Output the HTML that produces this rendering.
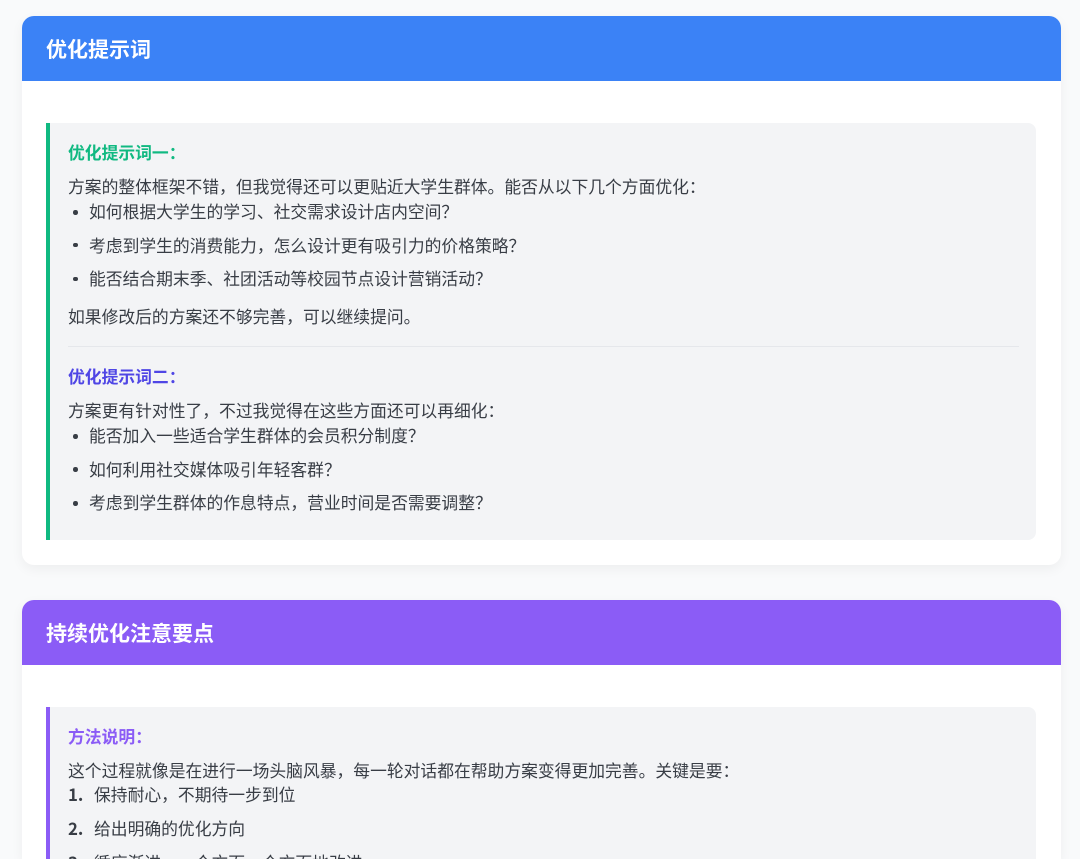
<!DOCTYPE html>
<html lang="zh"><head><meta charset="utf-8"><title>优化提示词</title>
<style>
html,body{margin:0;padding:0;width:1080px;height:859px;overflow:hidden;background:#f9fafb}
body{position:relative;font-family:"Noto Sans CJK SC","Liberation Sans",sans-serif;color:#383d45}
.clip{position:absolute;left:0;top:0;width:1080px;height:859px;overflow:hidden}
.card{position:absolute;left:22px;width:1039px;background:#fff;border-radius:12px;box-shadow:0 4px 12px rgba(0,0,0,.05)}
.hd{position:absolute;left:0;top:0;width:100%;height:65px;border-radius:12px 12px 0 0}
.hd div{position:absolute;left:24px;top:0;line-height:67px;font-size:21px;font-weight:700;color:#fff;white-space:nowrap}
.box{position:absolute;width:986px;background:#f3f4f6;border-left:4px solid;border-radius:0 8px 8px 0}
.t{position:absolute;white-space:nowrap;font-size:16.8px;line-height:24px;height:24px}
.b{font-weight:700}
.dot{position:absolute;width:4.6px;height:4.6px;border-radius:50%;background:#383d45}
.n{font-weight:700;color:#383d45}
</style></head><body>
<div class="clip">
<div class="card" style="top:16px;height:549px">
  <div class="hd" style="background:#3b82f6"><div>优化提示词</div></div>
</div>
<div class="card" style="top:600px;height:259px;border-radius:12px 12px 0 0">
  <div class="hd" style="background:#8b5cf6"><div>持续优化注意要点</div></div>
</div>

<div class="box" style="left:46px;top:123px;height:417px;border-color:#10b981"></div>
<div class="box" style="left:46px;top:707px;height:152px;border-color:#8b5cf6;border-radius:0 8px 0 0"></div>

<div class="t b" style="left:68px;top:140px;color:#10b981">优化提示词一：</div>
<div class="t" style="left:68px;top:174px">方案的整体框架不错，但我觉得还可以更贴近大学生群体。能否从以下几个方面优化：</div>
<div class="dot" style="left:73.2px;top:210.2px"></div>
<div class="t" style="left:89px;top:199px">如何根据大学生的学习、社交需求设计店内空间？</div>
<div class="dot" style="left:73.2px;top:242.7px"></div>
<div class="t" style="left:89px;top:233px">考虑到学生的消费能力，怎么设计更有吸引力的价格策略？</div>
<div class="dot" style="left:73.2px;top:276.7px"></div>
<div class="t" style="left:89px;top:266px">能否结合期末季、社团活动等校园节点设计营销活动？</div>
<div class="t" style="left:68px;top:304px">如果修改后的方案还不够完善，可以继续提问。</div>
<div style="position:absolute;left:68px;top:346px;width:951px;height:1px;background:#e5e7eb"></div>
<div class="t b" style="left:68px;top:364px;color:#4f46e5">优化提示词二：</div>
<div class="t" style="left:68px;top:398px">方案更有针对性了，不过我觉得在这些方面还可以再细化：</div>
<div class="dot" style="left:73.2px;top:434.2px"></div>
<div class="t" style="left:89px;top:423px">能否加入一些适合学生群体的会员积分制度？</div>
<div class="dot" style="left:73.2px;top:467.2px"></div>
<div class="t" style="left:89px;top:457px">如何利用社交媒体吸引年轻客群？</div>
<div class="dot" style="left:73.2px;top:501.2px"></div>
<div class="t" style="left:89px;top:490px">考虑到学生群体的作息特点，营业时间是否需要调整？</div>

<div class="t b" style="left:68px;top:724px;color:#8b5cf6">方法说明：</div>
<div class="t" style="left:68px;top:758px">这个过程就像是在进行一场头脑风暴，每一轮对话都在帮助方案变得更加完善。关键是要：</div>
<div class="t n" style="left:68px;top:782px">1.</div>
<div class="t" style="left:94px;top:782px">保持耐心，不期待一步到位</div>
<div class="t n" style="left:68px;top:816px">2.</div>
<div class="t" style="left:94px;top:816px">给出明确的优化方向</div>
<div class="t n" style="left:68px;top:850px">3.</div>
<div class="t" style="left:94px;top:850px">循序渐进，一个方面一个方面地改进</div>
</div>
</body></html>
